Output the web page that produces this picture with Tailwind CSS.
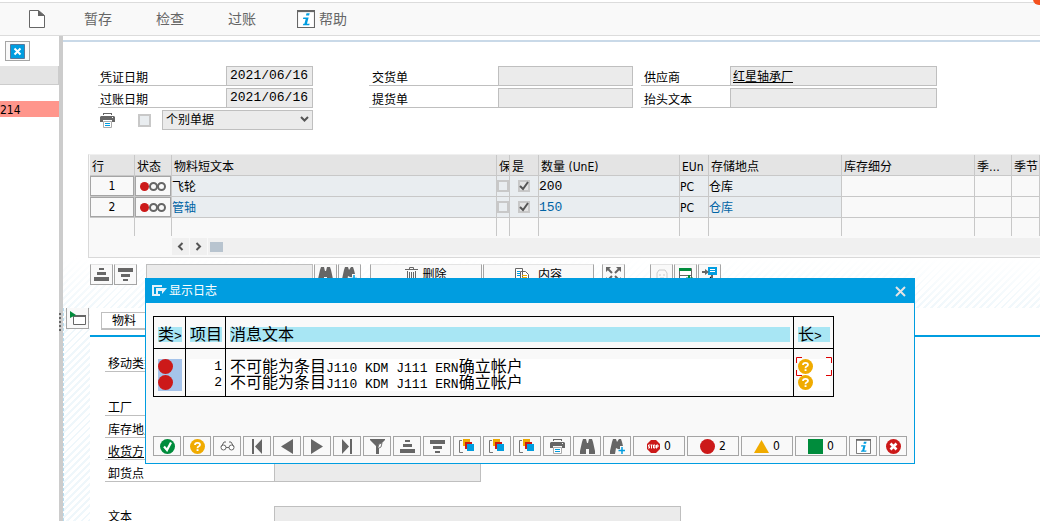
<!DOCTYPE html>
<html lang="zh-CN">
<head>
<meta charset="utf-8">
<title>显示日志</title>
<script src="https://cdn.jsdelivr.net/npm/@tailwindcss/browser@4"></script>
</head>
<body class="h-screen overflow-hidden flex flex-col bg-white text-black text-xs font-['DejaVu_Sans_Condensed','DejaVu_Sans','Noto_Sans_CJK_SC',sans-serif]">

<svg class="hidden" aria-hidden="true">
  <symbol id="sort-asc" viewBox="0 0 15 13"><path fill="#666" d="M5 0h5v2H5zM3 4h9v3H3zM0 9h15v4H0z"/></symbol>
  <symbol id="sort-desc" viewBox="0 0 15 13"><path fill="#666" d="M0 0h15v4H0zM3 6h9v3H3zM5 11h5v2H5z"/></symbol>
  <symbol id="printer" viewBox="0 0 15 15"><path fill="#666" d="M3 0h9v2h-1V1H4v1H3zM1 3h13l1 1v5h-3V7H3v2H0V4z"/><path fill="#f5f5f5" d="M12 4h1v1h-1z"/><path fill="#fff" stroke="#aaa" d="M3.500 8.500h8v6h-8z"/><path stroke="#009de0" d="M5 10.500h5M5 12.500h5"/></symbol>
  <symbol id="binoculars" viewBox="0 0 15 15"><path fill="#666" d="M3 0h3l1 4h1l1-4h3l1 3 2 9v3H9v-5H6v5H0v-3l2-9z"/></symbol>
  <symbol id="binoculars-plus" viewBox="0 0 15 15"><path fill="#666" d="M3 0h3l1 3 2-3h2l1 3 1 4h-3v3H8L6 9l-1 6H0v-3l2-9z"/><path stroke="#009de0" stroke-width="1.500" d="M12 8v7M8.500 11.500H15"/></symbol>
  <symbol id="help-dot" viewBox="0 0 15 15"><circle cx="7.500" cy="7.500" r="7.500" fill="#f0ab00"/><path fill="none" stroke="#fff" stroke-width="1.800" d="M5 6Q5 3.800 7.500 3.800T10 5.800Q10 7 8.500 7.500 7.500 8 7.500 9.200"/><path fill="#fff" d="M6.600 10.200h1.900V12H6.600z"/></symbol>
  <symbol id="red-dot" viewBox="0 0 15 15"><circle cx="7.500" cy="7.500" r="7.500" fill="#cc1919"/></symbol>
  <symbol id="layers" viewBox="0 0 16 14"><path fill="none" stroke="#777" d="M3 1.500H.5v12H4"/><path fill="#f0ab00" d="M4 0h7v7H4z"/><path fill="#cc1919" d="M6 3h7v7H6z"/><path fill="#009de0" d="M8 5h7v7H8z"/></symbol>
  <symbol id="info" viewBox="0 0 17 17"><path fill="#fff" stroke="#666" d="M.5.500h16v16H.5z"/><path stroke="#666" stroke-width="2" d="M0 1h17"/><path fill="#009de0" d="M9 3h3l-.6 2.300h-3zM6 7h5l-1.600 6H12l-.5 1.500H5.500L6 13h1l1.200-4.500H5.600z"/></symbol>
  <symbol id="lights" viewBox="0 0 26 9"><circle cx="4.500" cy="4.500" r="4.500" fill="#cc1919"/><circle cx="13.500" cy="4.500" r="3.500" fill="none" stroke="#666" stroke-width="2"/><circle cx="21.500" cy="4.500" r="3.500" fill="none" stroke="#666" stroke-width="2"/></symbol>
</svg>

<header class="relative shrink-0 mt-[2px] h-[34px] flex items-center border-y border-[#dcdcdc] bg-[#f9f9f9] text-sm text-[#666]">
  <button aria-label="新建" class="ml-[29px] w-[55px]"><svg class="w-4 h-[18px]" viewBox="0 0 16 18"><path fill="#fff" stroke="#666" d="M.5.500h9l6 5v12H.5z"/><path fill="#666" d="M9 0v6h7z"/></svg></button>
  <button class="w-[72px] text-left">暂存</button>
  <button class="w-[72px] text-left">检查</button>
  <button class="w-[69px] text-left">过账</button>
  <button class="flex items-center gap-1"><svg class="size-[18px]"><use href="#info"/></svg>帮助</button>
  <span class="absolute -top-[10px] -right-[5px] size-3 rounded-full bg-[#f4511e]"></span>
</header>

<div class="flex-1 min-h-0 flex">
  <aside class="w-[59px] shrink-0 pt-[5px]">
    <button aria-label="关闭" class="ml-[5px] w-[25px] h-5 flex items-center justify-center border border-[#a5a5a5] bg-[#f9f9f9]"><svg class="size-[15px]" viewBox="0 0 15 15"><path fill="#009de0" stroke="#57789c" d="M.5.500h14v14H.5z"/><path stroke="#fff" stroke-width="2" d="M4.500 4.500l6 6M10.500 4.500l-6 6"/></svg></button>
    <div class="mt-[5px] h-[19px] bg-[#e4e4e4] border-b border-r border-[#ccc]"></div>
    <div class="mt-4 h-4 leading-[18px] bg-[#ff968c]">214</div>
  </aside>
  <div class="w-1 shrink-0 bg-[#cccccc] pt-[277px]"><div class="h-[18px] border-l-2 border-dotted border-[#666]"></div></div>

  <main class="flex-1 min-w-0 flex flex-col mt-1 border-t-2 border-[#c9d9e8]">
    <form class="shrink-0 pl-[35px] pt-6 flex items-start">
      <div class="w-[215px] mr-14 flex flex-col gap-[2px]">
        <div class="flex h-5"><label for="d1" class="flex-1 pl-[2px] pt-[2px] leading-5 border-b border-[#bfbfbf]">凭证日期</label><input id="d1" value="2021/06/16" class="w-[87px] pl-[3px] bg-[#ebebeb] border border-[#bfbfbf] text-[13px] font-['Liberation_Mono',monospace]"></div>
        <div class="flex h-5"><label for="d2" class="flex-1 pl-[2px] pt-[2px] leading-5 border-b border-[#bfbfbf]">过账日期</label><input id="d2" value="2021/06/16" class="w-[87px] pl-[3px] bg-[#ebebeb] border border-[#bfbfbf] text-[13px] font-['Liberation_Mono',monospace]"></div>
        <div class="flex h-5 items-center">
          <button type="button" aria-label="打印" class="pl-[2px] w-10"><svg class="size-[15px]"><use href="#printer"/></svg></button>
          <input type="checkbox" aria-label="打印凭证" class="appearance-none size-[13px] mr-[11px] border-2 border-[#c8c8c8] bg-[#e9edf0]">
          <div class="relative flex-1 h-5"><select aria-label="单据类型" class="appearance-none block w-full h-5 pl-[3px] border border-[#bfbfbf] bg-[#ebebeb]"><option>个别单据</option></select><svg class="absolute right-1 top-[6px] w-[9px] h-[7px] pointer-events-none" viewBox="0 0 9 7"><path fill="none" stroke="#555" stroke-width="2" d="M1 1l3.500 3.500L8 1"/></svg></div>
        </div>
      </div>
      <div class="w-[264px] mr-2 flex flex-col gap-[2px]">
        <div class="flex h-5"><label for="g1" class="flex-1 pl-[3px] pt-[2px] leading-5 border-b border-[#bfbfbf]">交货单</label><input id="g1" class="w-[135px] bg-[#ebebeb] border border-[#bfbfbf]"></div>
        <div class="flex h-5"><label for="g2" class="flex-1 pl-[3px] pt-[2px] leading-5 border-b border-[#bfbfbf]">提货单</label><input id="g2" class="w-[135px] bg-[#ebebeb] border border-[#bfbfbf]"></div>
      </div>
      <div class="w-[296px] flex flex-col gap-[2px]">
        <div class="flex h-5"><label for="s1" class="flex-1 pl-[3px] pt-[2px] leading-5 border-b border-[#bfbfbf]">供应商</label><input id="s1" value="红星轴承厂" class="w-[207px] pl-[2px] pt-px underline bg-[#ebebeb] border border-[#bfbfbf]"></div>
        <div class="flex h-5"><label for="s2" class="flex-1 pl-[3px] pt-[2px] leading-5 border-b border-[#bfbfbf]">抬头文本</label><input id="s2" class="w-[207px] bg-[#ebebeb] border border-[#bfbfbf]"></div>
      </div>
    </form>

    <section class="shrink-0 ml-[25px] mt-6 pl-px pb-[2px] border border-r-0 border-t-[#f0f0f0] border-[#d9d9d9] bg-[#f9f9f9]">
      <table class="table-fixed w-full border-separate border-spacing-0 [&_td]:p-0 [&_th]:p-0 [&_th]:font-normal [&_th]:text-left [&_th]:overflow-hidden [&_th]:whitespace-nowrap [&_td]:overflow-hidden [&_td]:whitespace-nowrap [&_th]:border-r [&_td]:border-r [&_th]:border-b [&_th]:border-[#c8c8c8] [&_td]:border-[#c8c8c8]">
        <colgroup><col class="w-[45px]"><col class="w-[37px]"><col class="w-[325px]"><col class="w-[13px]"><col class="w-[29px]"><col class="w-[141px]"><col class="w-[29px]"><col class="w-[133px]"><col class="w-[133px]"><col class="w-[37px]"><col></colgroup>
        <thead>
          <tr class="h-[21px] bg-[#e4e4e4] leading-4 [&>th]:pl-[2px] [&>th]:pt-1"><th>行</th><th>状态</th><th>物料短文本</th><th>保</th><th>是</th><th>数量 (UnE)</th><th>EUn</th><th>存储地点</th><th>库存细分</th><th>季…</th><th>季节</th></tr>
        </thead>
        <tbody>
          <tr class="h-[21px] leading-[18px] [&>td]:border-b [&>td]:align-bottom [&>td:has(input)]:align-middle">
            <td><button class="block w-11 h-5 leading-[18px] border border-[#a5a5a5] bg-[#f9f9f9]">1</button></td>
            <td><button aria-label="红灯" class="w-9 h-5 flex items-center justify-center border border-[#a5a5a5] bg-[#f9f9f9]"><svg class="w-[26px] h-[9px]"><use href="#lights"/></svg></button></td>
            <td class="bg-[#e9edf0]">飞轮</td>
            <td class="bg-[#e9edf0]"><input type="checkbox" aria-label="保 1" class="appearance-none block size-3 border-2 border-[#c8c8c8]"></td>
            <td class="bg-[#e9edf0]"><label class="relative block ml-2 size-3"><input type="checkbox" checked aria-label="是 1" class="appearance-none block size-3 bg-[#e4e4e4] border-2 border-[#c8c8c8]"><svg class="absolute inset-0 size-3" viewBox="0 0 12 12"><path fill="none" stroke="#555" stroke-width="2" d="M2 6l3 3 5-7"/></svg></label></td>
            <td class="bg-[#e9edf0] text-[13px] font-['Liberation_Mono',monospace]">200</td>
            <td class="bg-[#e9edf0]">PC</td><td class="bg-[#e9edf0]">仓库</td><td></td><td></td><td></td>
          </tr>
          <tr class="h-[21px] leading-[18px] text-[#0064a5] [&>td]:border-b [&>td]:align-bottom [&>td:has(input)]:align-middle">
            <td><button class="block w-11 h-5 leading-[18px] border border-[#a5a5a5] bg-[#f9f9f9] text-black">2</button></td>
            <td><button aria-label="红灯" class="w-9 h-5 flex items-center justify-center border border-[#a5a5a5] bg-[#f9f9f9]"><svg class="w-[26px] h-[9px]"><use href="#lights"/></svg></button></td>
            <td class="bg-[#e9edf0]">管轴</td>
            <td class="bg-[#e9edf0]"><input type="checkbox" aria-label="保 2" class="appearance-none block size-3 border-2 border-[#c8c8c8]"></td>
            <td class="bg-[#e9edf0]"><label class="relative block ml-2 size-3"><input type="checkbox" checked aria-label="是 2" class="appearance-none block size-3 bg-[#e4e4e4] border-2 border-[#c8c8c8]"><svg class="absolute inset-0 size-3" viewBox="0 0 12 12"><path fill="none" stroke="#555" stroke-width="2" d="M2 6l3 3 5-7"/></svg></label></td>
            <td class="bg-[#e9edf0] text-[13px] font-['Liberation_Mono',monospace]">150</td>
            <td class="bg-[#e9edf0] text-black">PC</td><td class="bg-[#e9edf0]">仓库</td><td></td><td></td><td></td>
          </tr>
          <tr class="h-[18px]"><td></td><td></td><td></td><td></td><td></td><td></td><td></td><td></td><td></td><td></td><td></td></tr>
        </tbody>
      </table>
      <div class="mt-[2px] ml-[82px] h-[17px] flex gap-px">
        <button aria-label="向左" class="w-[17px] flex items-center justify-center bg-[#f0f0f0]"><svg class="w-[7px] h-[9px]" viewBox="0 0 7 9"><path fill="none" stroke="#555" stroke-width="2" d="M5.500 1L2 4.500 5.500 8"/></svg></button>
        <button aria-label="向右" class="w-[17px] flex items-center justify-center bg-[#f0f0f0]"><svg class="w-[7px] h-[9px]" viewBox="0 0 7 9"><path fill="none" stroke="#555" stroke-width="2" d="M1.500 1L5 4.500 1.500 8"/></svg></button>
        <div class="flex-1 flex items-center pl-[2px] bg-[#f0f0f0]"><div class="w-[13px] h-[10px] bg-[#b8c4cf]"></div></div>
      </div>
    </section>

    <div class="flex-1 min-h-0 flex flex-col bg-[repeating-linear-gradient(135deg,#ffffff_0px,#ffffff_3px,#eff7fb_3px,#eff7fb_5px)]">
      <div class="shrink-0 h-[50px] pt-[6px] pl-[27px] flex items-start bg-linear-to-b from-white to-white/10 [&>button]:h-[21px] [&>button]:border [&>button]:border-t-[#e4e4e4] [&>button]:border-[#a5a5a5] [&>button]:bg-[#f9f9f9] [&>button]:flex [&>button]:items-center [&>button]:justify-center">
        <button aria-label="升序" class="w-[23px] mr-px"><svg class="w-[15px] h-[13px]"><use href="#sort-asc"/></svg></button>
        <button aria-label="降序" class="w-[23px] mr-[9px]"><svg class="w-[15px] h-[13px]"><use href="#sort-desc"/></svg></button>
        <input aria-label="查找" class="w-[167px] h-[21px] mr-px border border-[#bfbfbf] bg-[#ebebeb]">
        <button aria-label="查找" class="w-[23px] mr-px"><svg class="size-[15px]"><use href="#binoculars"/></svg></button>
        <button aria-label="查找下一个" class="w-[23px] mr-[9px]"><svg class="size-[15px]"><use href="#binoculars-plus"/></svg></button>
        <button class="w-28 mr-px gap-1"><svg class="w-[13px] h-[15px]" viewBox="0 0 13 15"><path fill="none" stroke="#666" d="M4.500 2V.5h4V2M0 2.500h13M2.500 4v10.500h8V4M4.500 5v8M6.500 5v8M8.500 5v8"/></svg>删除</button>
        <button class="w-[111px] mr-2 gap-2"><svg class="w-[15px] h-[14px]" viewBox="0 0 15 14"><path fill="#fff" stroke="#666" d="M.5.500h7v10h-7zM5.500 3.500h5l3 3v7h-8z"/><path stroke="#f0ab00" d="M7 7.500h5M7 9.500h5M7 11.500h5"/><path stroke="#009de0" d="M2 3.500h3M2 5.500h3M2 7.500h3"/></svg>内容</button>
        <button aria-label="展开" class="w-[23px] mr-[25px]"><svg class="size-[15px]" viewBox="0 0 15 15"><path fill="#666" d="M0 0h5L0 5zM15 0v5l-5-5zM0 15v-5l5 5zM15 15h-5l5-5z"/><path stroke="#666" stroke-width="2" d="M2 2l4 4M13 2L9 6M2 13l4-4M13 13L9 9"/></svg></button>
        <button aria-label="用户" class="w-[23px] mr-px"><svg class="size-3" viewBox="0 0 12 12"><path fill="none" stroke="#ccc" d="M1 11V4l2-3h6l2 3v7zM3 6h2M7 6h2M4 9h4"/></svg></button>
        <button aria-label="添加行" class="w-[23px] mr-px"><svg class="size-[14px]" viewBox="0 0 14 14"><path fill="#fff" stroke="#666" d="M.5.500h12v11H.5z"/><path fill="#008c3c" d="M0 0h12v3H0z"/><path stroke="#666" d="M0 7.500h12"/><path stroke="#008c3c" stroke-width="2" d="M10 7v7M7 10.500h7"/></svg></button>
        <button aria-label="发送" class="w-[23px]"><svg class="size-[15px]" viewBox="0 0 15 15"><path fill="#009de0" d="M6 0h9v8H6z"/><path stroke="#fff" d="M8 2.500h5M8 4.500h5"/><path stroke="#666" stroke-width="2" d="M0 5h5M10 8v6H5"/><path fill="#666" d="M3 2l4 3-4 3z"/></svg></button>
      </div>
      <div class="flex-1 min-h-0 flex border-l border-dashed border-[#b5dcf0]">
        <div class="w-[26px] shrink-0 pl-[2px]"><button aria-label="展开明细" class="w-[23px] h-[21px] flex items-center justify-center border border-t-0 border-[#a5a5a5] bg-[#f9f9f9]"><svg class="w-4 h-[14px]" viewBox="0 0 16 14"><path fill="#fff" stroke="#666" d="M3.500 4.500h12v9h-12z"/><path fill="#666" d="M4 4h12v2H4z"/><path fill="#008c3c" d="M0 0l6 4-6 3z"/></svg></button></div>
        <div class="flex-1 bg-white">
          <div class="h-[29px] pt-1 pl-[11px] border-b-2 border-[#009de0]"><button class="w-24 h-[18px] pl-[10px] leading-4 text-left border border-b-2 border-[#bfbfbf] bg-white">物料</button></div>
          <div class="pl-[15px] pt-[15px] flex flex-col gap-[2px] leading-5">
            <div class="flex h-5 mb-[22px]"><label for="m1" class="w-[169px] pl-[3px] pt-[2px] border-b border-[#bfbfbf]">移动类型</label><input id="m1" class="w-[207px] border border-[#bfbfbf] bg-[#ebebeb]"></div>
            <div class="flex h-5"><label for="m2" class="w-[169px] pl-[3px] pt-[2px] border-b border-[#bfbfbf]">工厂</label><input id="m2" class="w-[207px] border border-[#bfbfbf] bg-[#ebebeb]"></div>
            <div class="flex h-5"><label for="m3" class="w-[169px] pl-[3px] pt-[2px] border-b border-[#bfbfbf]">库存地点</label><input id="m3" class="w-[207px] border border-[#bfbfbf] bg-[#ebebeb]"></div>
            <div class="flex h-5"><label for="m4" class="w-[169px] pl-[3px] pt-[2px] underline border-b border-[#bfbfbf]">收货方</label><input id="m4" class="w-[207px] border border-[#bfbfbf] bg-[#ebebeb]"></div>
            <div class="flex h-5 mb-[22px]"><label for="m5" class="w-[169px] pl-[3px] pt-[2px] border-b border-[#bfbfbf]">卸货点</label><input id="m5" class="w-[207px] border border-[#bfbfbf] bg-[#ebebeb]"></div>
            <div class="flex h-5"><label for="m6" class="w-[169px] pl-[3px] pt-px border-b border-[#bfbfbf]">文本</label><input id="m6" class="w-[407px] border border-[#bfbfbf] bg-[#ebebeb]"></div>
          </div>
        </div>
      </div>
    </div>
  </main>
</div>

<div role="dialog" aria-label="显示日志" class="absolute left-[145px] top-[278px] w-[770px] border border-[#009de0] bg-[#f9f9f9]">
  <div class="h-6 pl-[6px] pr-2 flex items-center bg-[#009de0] text-white">
    <svg class="w-[15px] h-3 mr-[2px]" viewBox="0 0 15 12"><path fill="none" stroke="#e4f2fa" stroke-width="2" d="M10 1H1v9h7"/><path fill="#e4f2fa" d="M4 3h11l-5 6V6H6v3H4z"/></svg>
    <span class="flex-1">显示日志</span>
    <button aria-label="关闭"><svg class="size-[11px]" viewBox="0 0 11 11"><path stroke="#e4e4e4" stroke-width="2" d="M1 1l9 9M10 1l-9 9"/></svg></button>
  </div>
  <div class="pt-[13px] px-[7px] pb-[7px]">
    <table class="table-fixed w-[681px] border border-black border-separate border-spacing-0 text-base leading-[15px] [&_th]:font-normal [&_th]:text-left [&_th]:border-b [&_th]:border-r [&_td]:border-r [&_th]:border-black [&_td]:border-black [&_tr>*:last-child]:border-r-0 [&_th]:pt-[10px] [&_th]:pb-[6px] [&_th]:pl-1 [&_th]:pr-[3px] [&_td]:pl-1 [&_td]:pr-[3px] [&_th>div]:h-[15px] [&_td>div]:h-4 [&_td>div]:leading-4 [&_div]:whitespace-nowrap">
      <colgroup><col class="w-8"><col class="w-10"><col class="w-[568px]"><col></colgroup>
      <thead><tr><th><div class="bg-[#a8e6f4]">类<span class="text-[13px] font-['Liberation_Mono',monospace]">&gt;</span></div></th><th><div class="bg-[#a8e6f4]">项目</div></th><th><div class="bg-[#a8e6f4]">消息文本</div></th><th><div class="bg-[#a8e6f4]">长<span class="text-[13px] font-['Liberation_Mono',monospace]">&gt;</span></div></th></tr></thead>
      <tbody>
        <tr class="[&>td]:pt-[10px]">
          <td><div class="bg-[#a5c3ea]"><svg class="size-[15px]"><use href="#red-dot"/></svg></div></td>
          <td><div class="bg-white text-right text-[13px] font-['Liberation_Mono',monospace]">1</div></td>
          <td><div class="bg-white">不可能为条目<span class="text-[13px] font-['Liberation_Mono',monospace]">J110 KDM J111 ERN</span>确立帐户</div></td>
          <td><div class="relative bg-white"><svg class="size-[15px]"><use href="#help-dot"/></svg><svg class="absolute -left-[2px] -top-[2px] w-9 h-[19px]" viewBox="0 0 36 19"><path fill="none" stroke="#dd0000" d="M6 .5H.5V6M30 .5h5.500V6M.5 13v5.500H6M35.500 13v5.500H30"/></svg></div></td>
        </tr>
        <tr class="[&>td]:pb-[5px]">
          <td><div class="bg-[#a5c3ea]"><svg class="size-[15px]"><use href="#red-dot"/></svg></div></td>
          <td><div class="bg-white text-right text-[13px] font-['Liberation_Mono',monospace]">2</div></td>
          <td><div class="bg-white">不可能为条目<span class="text-[13px] font-['Liberation_Mono',monospace]">J110 KDM J111 ERN</span>确立帐户</div></td>
          <td><div class="bg-white"><svg class="size-[15px]"><use href="#help-dot"/></svg></div></td>
        </tr>
      </tbody>
    </table>
    <div class="mt-[39px] flex gap-[2px] [&>button]:h-5 [&>button]:w-7 [&>button]:flex [&>button]:items-center [&>button]:justify-center [&>button]:border [&>button]:border-[#a5a5a5] [&>button]:bg-[#f9f9f9]">
      <button aria-label="确认"><svg class="size-[15px]" viewBox="0 0 15 15"><circle cx="7.500" cy="7.500" r="7.500" fill="#008c3c"/><path fill="none" stroke="#fff" stroke-width="2.200" d="M4 7.500l3 3.500 4-7.500"/></svg></button>
      <button aria-label="帮助"><svg class="size-[15px]"><use href="#help-dot"/></svg></button>
      <button aria-label="明细"><svg class="w-[15px] h-[10px]" viewBox="0 0 15 10"><path fill="none" stroke="#666" d="M1 6l3-5h2M14 6l-3-5H9"/><circle cx="3.500" cy="6.500" r="2.500" fill="#fff" stroke="#666"/><circle cx="11.500" cy="6.500" r="2.500" fill="#fff" stroke="#666"/><path stroke="#666" d="M6 6.500h3"/></svg></button>
      <button aria-label="第一个"><svg class="w-[10px] h-[15px]" viewBox="0 0 10 15"><path fill="#666" d="M0 0h2v15H0zM10 0v15L3 7.500z"/></svg></button>
      <button aria-label="上一个"><svg class="w-3 h-[15px]" viewBox="0 0 12 15"><path fill="#666" d="M12 0v15L0 7.500z"/></svg></button>
      <button aria-label="下一个"><svg class="w-3 h-[15px]" viewBox="0 0 12 15"><path fill="#666" d="M0 0v15l12-7.500z"/></svg></button>
      <button aria-label="最后一个"><svg class="w-[10px] h-[15px]" viewBox="0 0 10 15"><path fill="#666" d="M8 0h2v15H8zM0 0v15l7-7.500z"/></svg></button>
      <button aria-label="过滤"><svg class="size-[15px]" viewBox="0 0 15 15"><path fill="#666" d="M0 0h15v1L9 7v8H6V7L0 1z"/><path fill="#f9f9f9" stroke="#777" d="M8 8l1-3 3-1-1 4-2 1"/></svg></button>
      <button aria-label="升序"><svg class="w-[15px] h-[13px]"><use href="#sort-asc"/></svg></button>
      <button aria-label="降序"><svg class="w-[15px] h-[13px]"><use href="#sort-desc"/></svg></button>
      <button aria-label="布局 1"><svg class="w-4 h-[14px]"><use href="#layers"/></svg></button>
      <button aria-label="布局 2"><svg class="w-4 h-[14px]"><use href="#layers"/></svg></button>
      <button aria-label="布局 3"><svg class="w-4 h-[14px]"><use href="#layers"/></svg></button>
      <button aria-label="打印"><svg class="size-[15px]"><use href="#printer"/></svg></button>
      <button aria-label="查找"><svg class="size-[15px]"><use href="#binoculars"/></svg></button>
      <button aria-label="查找下一个"><svg class="size-[15px]"><use href="#binoculars-plus"/></svg></button>
      <button class="min-w-[52px] gap-1"><svg class="size-[13px]" viewBox="0 0 13 13"><path fill="#cc1919" d="M4 0h5l4 4v5l-4 4H4L0 9V4z"/><path fill="none" stroke="#fff" d="M3 5H1.500v1.500h1V8H1M3.500 5h2M4.500 5v3.500M6.500 5H8v3H6.500zM9.500 8.500V5H11v2H9.500"/></svg>0</button>
      <button class="min-w-[52px] gap-1"><svg class="size-[15px]"><use href="#red-dot"/></svg>2</button>
      <button class="min-w-[52px] gap-1"><svg class="w-[15px] h-[13px]" viewBox="0 0 15 13"><path fill="#f0ab00" d="M7.500 0L15 13H0z"/></svg>0</button>
      <button class="min-w-[52px] gap-1"><span class="size-[15px] bg-[#008c3c]"></span>0</button>
      <button aria-label="信息"><svg class="size-[15px]"><use href="#info"/></svg></button>
      <button aria-label="取消"><svg class="size-[15px]" viewBox="0 0 15 15"><circle cx="7.500" cy="7.500" r="7.500" fill="#cc1919"/><path stroke="#fff" stroke-width="2.600" d="M4.500 4.500l6 6M10.500 4.500l-6 6"/></svg></button>
    </div>
  </div>
</div>
</body>
</html>
